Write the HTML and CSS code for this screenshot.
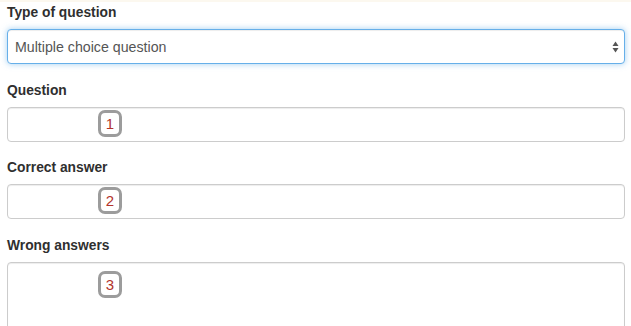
FILE: index.html
```html
<!DOCTYPE html>
<html lang="en">
<head>
<meta charset="utf-8">
<title>Question form</title>
<link rel="stylesheet" href="styles.css">
</head>
<body>
<div class="page">
  <div class="group">
    <div class="label">Type of question</div>
    <div class="control select">
      <span class="select-text">Multiple choice question</span>
      <svg class="arrows" width="7" height="12" viewBox="0 0 7 12" aria-hidden="true">
        <path d="M3.5 0.5 L6.5 5 L0.5 5 Z" fill="#555"/>
        <path d="M3.5 11.5 L6.5 7 L0.5 7 Z" fill="#555"/>
      </svg>
    </div>
  </div>
  <div class="group">
    <div class="label">Question</div>
    <div class="control field"><span class="badge">1</span></div>
  </div>
  <div class="group">
    <div class="label">Correct answer</div>
    <div class="control field"><span class="badge">2</span></div>
  </div>
  <div class="group">
    <div class="label">Wrong answers</div>
    <div class="control field area"><span class="badge">3</span></div>
  </div>
</div>
</body>
</html>
```
FILE: styles.css
```css
html, body {
  margin: 0;
  padding: 0;
  background: #ffffff;
  overflow: hidden;
}
body {
  border-top: 2px solid #fcf8ef;
  font-family: "Liberation Sans", Arial, Helvetica, sans-serif;
  color: #333333;
}
.page {
  padding: 1px 6px 0 7px;
}
.group {
  margin-bottom: 16.5px;
}
.label {
  font-size: 13.8px;
  font-weight: bold;
  line-height: 20px;
  margin-bottom: 6px;
  color: #2f2f2f;
}
.control {
  box-sizing: border-box;
  width: 618px;
  height: 35px;
  border: 1px solid #cccccc;
  border-radius: 4px;
  background: #ffffff;
  box-shadow: inset 0 1px 1px rgba(0, 0, 0, 0.075);
}
.select {
  display: flex;
  align-items: center;
  justify-content: space-between;
  padding: 0 5px 0 7px;
  border-color: #66afe9;
  box-shadow: inset 0 1px 1px rgba(0, 0, 0, 0.075), 0 0 6px rgba(102, 175, 233, 0.6);
}
.select-text {
  font-size: 14.2px;
  color: #555555;
  padding-top: 1px;
}
.arrows {
  display: block;
  margin-top: 1px;
}
.field {
  padding: 2px 0 0 90px;
}
.area {
  height: 90px;
  padding-top: 8px;
}
.badge {
  box-sizing: border-box;
  display: flex;
  align-items: center;
  justify-content: center;
  width: 24px;
  height: 27px;
  border: 3px solid #9c9c9c;
  border-radius: 7px;
  background: #ffffff;
  color: #b3342b;
  font-size: 15px;
  line-height: 1;
}
```
